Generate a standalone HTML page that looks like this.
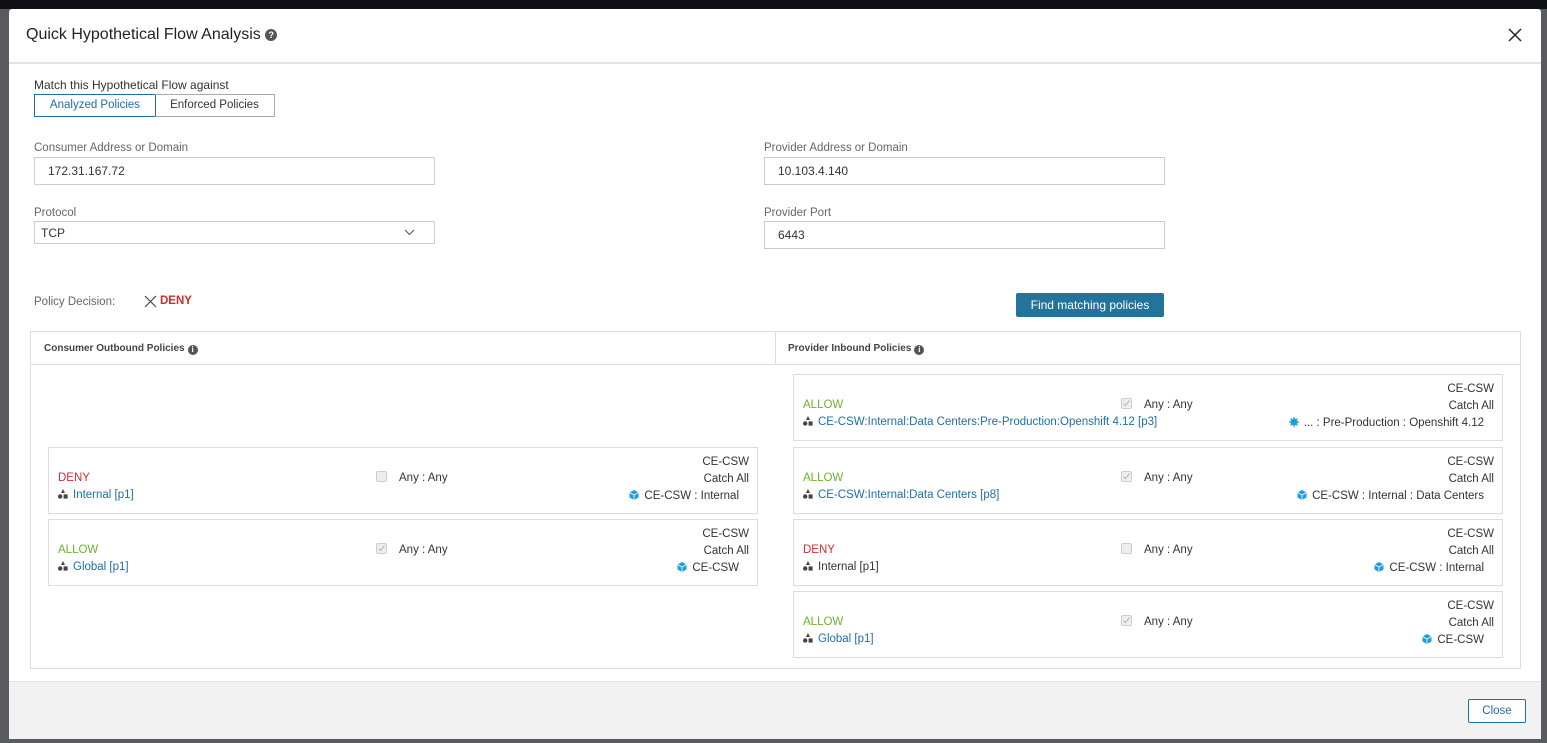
<!DOCTYPE html>
<html><head><style>
*{box-sizing:border-box;margin:0;padding:0}
body{width:1547px;height:743px;position:relative;overflow:hidden;background:#5a5b5e;font-family:"Liberation Sans",sans-serif;font-size:12px;color:#333}
.a{position:absolute}
.top{left:0;top:0;width:1547px;height:9px;background:#0f1115}
.modal{left:9px;top:9px;width:1532px;height:730px;background:#fff;border-radius:3px;overflow:hidden}
.hdr{left:0;top:0;width:1532px;height:55px;border-bottom:2px solid #e3e3e3}
.inp{border:1px solid #ccc;height:28px;background:#fff;padding:6px 13px;font-size:12px;color:#333}
.lbl{color:#666;font-size:11.5px}
.card{border:1px solid #ddd;background:#fff;height:67px;font-size:11.5px}
.card .l1{position:absolute;left:9px;top:24px}
.card .l2{position:absolute;left:9px;top:41px;color:#1d6fa5}
.card .cb{position:absolute;width:11px;height:11px;border:1px solid #ccc;border-radius:2px;background:#eee;top:23px}
.card .any{position:absolute;top:24px}
.card .r{position:absolute;right:8px;text-align:right;line-height:17px;top:6px}
.card .r3{position:absolute;right:18px;top:42px}
.allow{color:#6ab42d}.deny{color:#d12d2d}
.ico{display:inline-block;width:10px;height:10px;vertical-align:-1px;margin-right:5px}
.info{display:inline-block;width:10px;height:10px;border-radius:50%;background:#555;color:#fff;font-size:8px;text-align:center;line-height:10px;vertical-align:-1px;margin-left:3px}
</style></head><body>
<div class="a top"></div>
<div class="a modal">
 <div class="a hdr">
  <div class="a" style="left:17px;top:17px;font-size:16px;color:#222">Quick Hypothetical Flow Analysis <span style="display:inline-block;width:12px;height:12px;border-radius:50%;background:#555;color:#fff;font-size:9px;text-align:center;line-height:12px;font-weight:bold;vertical-align:1px">?</span></div>
  <svg class="a" style="left:1499px;top:19px" width="14" height="14"><path d="M1 1L13 13M13 1L1 13" stroke="#222" stroke-width="1.5"/></svg>
 </div>
 <div class="a" style="left:25px;top:69px;color:#333">Match this Hypothetical Flow against</div>
 <div class="a" style="left:25px;top:85px;width:122px;height:23px;border:1px solid #1d6fa5;color:#1d6fa5;text-align:center;line-height:21px;font-size:11.5px">Analyzed Policies</div>
 <div class="a" style="left:146px;top:85px;width:120px;height:23px;border:1px solid #aaa;border-left:none;text-align:center;line-height:21px;font-size:11.5px">Enforced Policies</div>
 <div class="a lbl" style="left:25px;top:133px">Consumer Address or Domain</div>
 <div class="a inp" style="left:25px;top:148px;width:401px">172.31.167.72</div>
 <div class="a lbl" style="left:25px;top:198px">Protocol</div>
 <div class="a inp" style="left:25px;top:212px;width:401px;height:23px;padding:4px 6px">TCP<svg class="a" style="left:369px;top:7px" width="11" height="7"><path d="M1 1L5.5 5.5L10 1" stroke="#555" fill="none"/></svg></div>
 <div class="a lbl" style="left:755px;top:133px">Provider Address or Domain</div>
 <div class="a inp" style="left:755px;top:148px;width:401px">10.103.4.140</div>
 <div class="a lbl" style="left:755px;top:198px">Provider Port</div>
 <div class="a inp" style="left:755px;top:212px;width:401px">6443</div>
 <div class="a lbl" style="left:25px;top:287px;font-size:11.5px">Policy Decision:</div>
 <svg class="a" style="left:135px;top:286px" width="13" height="13"><path d="M1 1L12 12M12 1L1 12" stroke="#444" stroke-width="1.2"/></svg>
 <div class="a" style="left:151px;top:286px;color:#d12d2d;font-weight:bold;font-size:11.5px">DENY</div>
 <div class="a" style="left:1007px;top:284px;width:148px;height:24px;background:#23739b;border-radius:2px;color:#fff;text-align:center;line-height:24px;font-size:12px">Find matching policies</div>
 <div class="a" style="left:21px;top:322px;width:1491px;height:338px;border:1px solid #ddd">
  <div class="a" style="left:0;top:32px;width:1489px;border-top:1px solid #ddd"></div>
  <div class="a" style="left:744px;top:0;height:32px;border-left:1px solid #ddd"></div>
  <div class="a" style="left:13px;top:11px;font-size:10px;font-weight:bold;color:#444">Consumer Outbound Policies<span class="info">i</span></div>
  <div class="a" style="left:757px;top:11px;font-size:10px;font-weight:bold;color:#444">Provider Inbound Policies<span class="info">i</span></div>
 </div>
</div>
<div id="cards"></div>
<script>
const tri='<svg class="ico" viewBox="0 0 10 10"><path d="M5 0L7 4H3Z" fill="#444"/><circle cx="2.2" cy="7.5" r="2.2" fill="#444"/><rect x="5.6" y="5.4" width="4" height="4.2" fill="#444"/></svg>';
const cube='<svg class="ico" viewBox="0 0 10 10"><path d="M5 0L9.5 2.5V7.5L5 10L0.5 7.5V2.5Z" fill="#1c9fd8"/><path d="M0.5 2.5L5 5L9.5 2.5M5 5V10" stroke="#fff" stroke-width="0.8" fill="none"/></svg>';
const gear='<svg class="ico" viewBox="0 0 10 10"><circle cx="5" cy="5" r="3.5" fill="#1c9fd8"/><path d="M5 0V10M0 5H10M1.5 1.5L8.5 8.5M8.5 1.5L1.5 8.5" stroke="#1c9fd8" stroke-width="1.2"/></svg>';
const cards=[
[48,447,'deny','DENY',false,'Internal [p1]',cube+'CE-CSW : Internal',true],
[48,519,'allow','ALLOW',true,'Global [p1]',cube+'CE-CSW',true],
[793,374,'allow','ALLOW',true,'CE-CSW:Internal:Data Centers:Pre-Production:Openshift 4.12 [p3]',gear+'... : Pre-Production : Openshift 4.12',true],
[793,447,'allow','ALLOW',true,'CE-CSW:Internal:Data Centers [p8]',cube+'CE-CSW : Internal : Data Centers',true],
[793,519,'deny','DENY',false,'Internal [p1]',cube+'CE-CSW : Internal',false],
[793,591,'allow','ALLOW',true,'Global [p1]',cube+'CE-CSW',true]];
let h='';
for(const c of cards){
 h+=`<div class="a card" style="left:${c[0]}px;top:${c[1]}px;width:710px">
 <div class="l1 ${c[2]}">${c[3]}</div>
 <div class="l2" style="${c[7]?'':'color:#333'}">${tri}${c[5]}</div>
 <div class="cb" style="left:327px">${c[4]?'<svg width="9" height="9" style="position:absolute;left:0;top:0"><path d="M1.5 4.5L3.5 6.5L7.5 1.5" stroke="#bbb" fill="none" stroke-width="1.2"/></svg>':''}</div>
 <div class="any" style="left:350px">Any : Any</div>
 <div class="r">CE-CSW<br>Catch All</div>
 <div class="r3">${c[6]}</div></div>`;
}
document.getElementById('cards').innerHTML=h;
</script>
<div class="a" style="left:9px;top:681px;width:1532px;height:58px;background:#f2f2f2;border-top:1px solid #e3e3e3"></div>
<div class="a" style="left:1468px;top:699px;width:58px;height:24px;border:1px solid #1d6fa5;border-radius:2px;color:#1d6fa5;text-align:center;line-height:22px;font-size:11.5px;background:#fff">Close</div>
</body></html>
